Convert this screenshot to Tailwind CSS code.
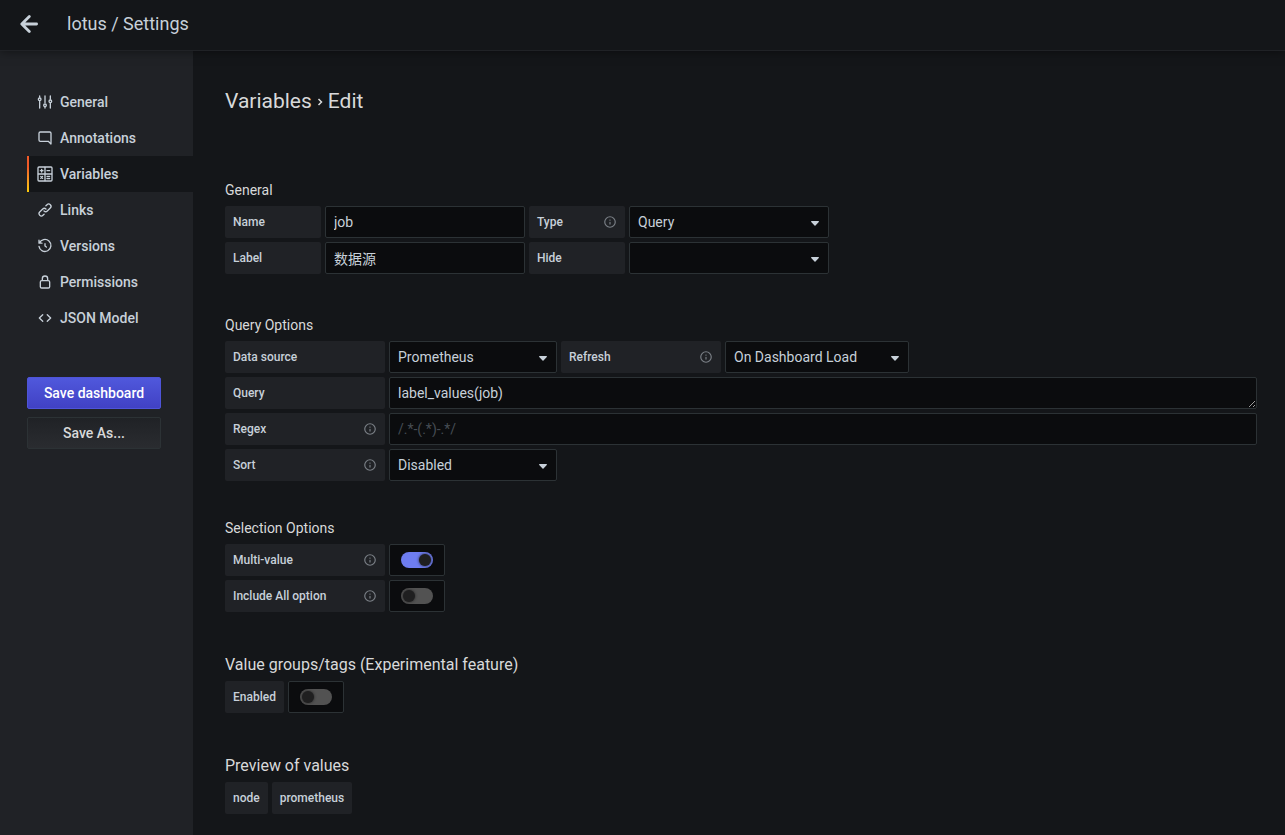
<!DOCTYPE html>
<html lang="en">
<head>
<meta charset="utf-8">
<meta name="viewport" content="width=device-width, initial-scale=1">
<title>lotus / Settings</title>
<script src="https://cdn.jsdelivr.net/npm/@tailwindcss/browser@4"></script>
</head>
<body class="flex min-h-screen flex-col bg-[#141619] font-[Roboto,'Noto_Sans_CJK_SC',sans-serif] text-sm text-[#c7d0d9]">
<svg class="hidden" aria-hidden="true">
  <symbol id="info" viewBox="0 0 24 24"><path fill="currentColor" d="M12,2A10,10,0,1,0,22,12,10,10,0,0,0,12,2Zm0,18a8,8,0,1,1,8-8A8,8,0,0,1,12,20Zm0-8.5a1,1,0,0,0-1,1v3a1,1,0,0,0,2,0v-3A1,1,0,0,0,12,11.5Zm0-4a1.25,1.25,0,1,0,1.25,1.25A1.25,1.25,0,0,0,12,7.5Z"/></symbol>
  <symbol id="caret" viewBox="0 0 8 5"><path fill="currentColor" d="M.7 0h6.6c.6 0 .9.6.5 1L4.5 4.6a.7.7 0 0 1-1 0L.2 1C-.2.6.1 0 .7 0Z"/></symbol>
</svg>

<header class="relative z-10 flex h-[51px] shrink-0 items-center border-b border-[#202226] bg-[#141619] pb-[3px] pl-4 shadow-[0_0_10px_rgba(0,0,0,0.5)]">
  <button type="button" aria-label="Back" class="flex size-[26px] items-center justify-center">
    <svg class="size-[18px]" viewBox="0 0 18 18" fill="none" stroke="currentColor" stroke-width="2.8" stroke-linecap="round" stroke-linejoin="round"><path d="M9.3 1.5 1.8 9l7.5 7.5M2.2 9h14.4"/></svg>
  </button>
  <h1 class="ml-[25px] text-lg leading-6">lotus / Settings</h1>
</header>

<div class="flex grow">
  <aside class="w-[193px] shrink-0 bg-[#202226] pt-[33px] pl-[27px]">
    <nav class="flex flex-col font-medium">
      <a href="#" class="flex h-9 items-center gap-[7px] pl-[10px]">
        <svg class="size-4" viewBox="0 0 24 24" fill="none" stroke="currentColor" stroke-width="2" stroke-linecap="round"><path d="M4 3v2M4 11v10M12 3v10M12 19v2M20 3v5M20 14v7"/><circle cx="4" cy="8" r="2"/><circle cx="12" cy="17" r="2"/><circle cx="20" cy="11" r="2"/></svg>
        General</a>
      <a href="#" class="flex h-9 items-center gap-[7px] pl-[10px]">
        <svg class="size-4" viewBox="0 0 24 24" fill="currentColor"><path d="M19,2H5A3,3,0,0,0,2,5V15a3,3,0,0,0,3,3H16.59l3.7,3.71A1,1,0,0,0,21,22a.84.84,0,0,0,.38-.08A1,1,0,0,0,22,21V5A3,3,0,0,0,19,2Zm1,16.59-2.29-2.3A1,1,0,0,0,17,16H5a1,1,0,0,1-1-1V5A1,1,0,0,1,5,4H19a1,1,0,0,1,1,1Z"/></svg>
        Annotations</a>
      <a href="#" aria-current="page" class="flex h-9 bg-[#141619]">
        <span class="w-[2px] bg-linear-to-b from-[#f05a28] from-30% to-[#fbca0a] to-99%"></span>
        <span class="flex items-center gap-[7px] pl-2">
          <svg class="size-4" viewBox="0 0 24 24" fill="none" stroke="currentColor" stroke-width="2" stroke-linecap="round"><rect x="1.5" y="1.5" width="21" height="21" rx="1.5"/><path d="M12 2v20M2 12h20M5 7h4M7 5v4M15 7h4M5.6 15.6l2.8 2.8M8.4 15.6l-2.8 2.8M15 15.5h4M15 18.8h4"/></svg>
          Variables</span></a>
      <a href="#" class="flex h-9 items-center gap-[7px] pl-[10px]">
        <svg class="size-4" viewBox="0 0 24 24" fill="currentColor"><path d="M10,17.55,8.23,19.27a2.47,2.47,0,0,1-3.5-3.5l4.54-4.55a2.46,2.46,0,0,1,3.39-.09l.12.1a1,1,0,0,0,1.4-1.43A2.75,2.75,0,0,0,14,9.59a4.46,4.46,0,0,0-6.09.22L3.31,14.36a4.48,4.48,0,0,0,6.33,6.33L11.37,19A1,1,0,0,0,10,17.55ZM20.69,3.31a4.49,4.49,0,0,0-6.33,0L12.63,5A1,1,0,0,0,14,6.45l1.73-1.72a2.47,2.47,0,0,1,3.5,3.5l-4.54,4.55a2.46,2.46,0,0,1-3.39.09l-.12-.1a1,1,0,0,0-1.4,1.43,2.75,2.75,0,0,0,.23.21,4.47,4.47,0,0,0,6.09-.22l4.55-4.55A4.49,4.49,0,0,0,20.69,3.31Z"/></svg>
        Links</a>
      <a href="#" class="flex h-9 items-center gap-[7px] pl-[10px]">
        <svg class="size-4" viewBox="0 0 24 24" fill="none" stroke="currentColor" stroke-width="2" stroke-linecap="round" stroke-linejoin="round"><path d="M3 3.2v4.5h4.5M3.6 7.7A9 9 0 1 1 3 12.5M12 8.5V12l2 1.5"/></svg>
        Versions</a>
      <a href="#" class="flex h-9 items-center gap-[7px] pl-[10px]">
        <svg class="size-4" viewBox="0 0 24 24" fill="currentColor"><path d="M17,9V7A5,5,0,0,0,7,7V9a3,3,0,0,0-3,3v7a3,3,0,0,0,3,3H17a3,3,0,0,0,3-3V12A3,3,0,0,0,17,9ZM9,7a3,3,0,0,1,6,0V9H9Zm9,12a1,1,0,0,1-1,1H7a1,1,0,0,1-1-1V12a1,1,0,0,1,1-1H17a1,1,0,0,1,1,1Z"/></svg>
        Permissions</a>
      <a href="#" class="flex h-9 items-center gap-[7px] pl-[10px]">
        <svg class="size-4" viewBox="0 0 24 24" fill="none" stroke="currentColor" stroke-width="2" stroke-linecap="round" stroke-linejoin="round"><path d="M8.6 7 3.5 12l5.1 5M15.4 7l5.1 5-5.1 5"/></svg>
        JSON Model</a>
    </nav>
    <div class="mt-[41px] mr-8 flex flex-col gap-2 font-medium">
      <button type="button" class="h-8 rounded-[2px] border border-[#4e54d8] bg-linear-to-b from-[#5058dc] to-[#4141c4] text-white">Save dashboard</button>
      <button type="button" class="h-8 rounded-[2px] border border-[#2c3235] bg-linear-to-b from-[#202226] to-[#2a2c30] text-[#d8d9da]">Save As...</button>
    </div>
  </aside>

  <main class="min-w-0 grow pt-9 pr-7 pb-5 pl-8">
    <h2 class="flex items-center text-[21px] leading-7 text-[#d8d9da]">Variables
      <svg class="mx-[5px] mt-px h-2 w-[6px]" viewBox="0 0 6 8" fill="none" stroke="currentColor" stroke-width="1.5"><path d="m1.5 1 3 3-3 3"/></svg>
      Edit</h2>

    <form>
      <section class="mt-[63px]">
        <h3 class="mb-1 leading-6 text-[#d8d9da]">General</h3>
        <div class="flex flex-col gap-1">
          <div class="flex gap-1">
            <label for="name" class="flex h-8 w-24 items-center rounded-[2px] bg-[#202226] px-2 text-xs font-medium">Name</label>
            <input id="name" type="text" value="job" class="h-8 w-[200px] rounded-[2px] border border-[#2c3235] bg-[#0b0c0e] px-2">
            <label for="type" class="flex h-8 w-24 items-center justify-between rounded-[2px] bg-[#202226] px-2 text-xs font-medium">Type <svg class="size-[14px] text-[#7b8087]"><use href="#info"/></svg></label>
            <div class="relative w-[200px]">
              <select id="type" class="h-8 w-full appearance-none rounded-[2px] border border-[#2c3235] bg-[#0b0c0e] px-2"><option>Query</option></select>
              <svg class="pointer-events-none absolute top-[15px] right-[10px] h-[5px] w-2"><use href="#caret"/></svg>
            </div>
          </div>
          <div class="flex gap-1">
            <label for="label" class="flex h-8 w-24 items-center rounded-[2px] bg-[#202226] px-2 text-xs font-medium">Label</label>
            <input id="label" type="text" value="数据源" class="h-8 w-[200px] rounded-[2px] border border-[#2c3235] bg-[#0b0c0e] px-2">
            <label for="hide" class="flex h-8 w-24 items-center rounded-[2px] bg-[#202226] px-2 text-xs font-medium">Hide</label>
            <div class="relative w-[200px]">
              <select id="hide" class="h-8 w-full appearance-none rounded-[2px] border border-[#2c3235] bg-[#0b0c0e] px-2"><option></option></select>
              <svg class="pointer-events-none absolute top-[15px] right-[10px] h-[5px] w-2"><use href="#caret"/></svg>
            </div>
          </div>
        </div>
      </section>

      <section class="mt-[39px]">
        <h3 class="mb-1 leading-6 text-[#d8d9da]">Query Options</h3>
        <div class="flex flex-col gap-1">
          <div class="flex gap-1">
            <label for="source" class="flex h-8 w-40 items-center rounded-[2px] bg-[#202226] px-2 text-xs font-medium">Data source</label>
            <div class="relative w-[168px]">
              <select id="source" class="h-8 w-full appearance-none rounded-[2px] border border-[#2c3235] bg-[#0b0c0e] px-2"><option>Prometheus</option></select>
              <svg class="pointer-events-none absolute top-[15px] right-[10px] h-[5px] w-2"><use href="#caret"/></svg>
            </div>
            <label for="refresh" class="flex h-8 w-40 items-center justify-between rounded-[2px] bg-[#202226] px-2 text-xs font-medium">Refresh <svg class="size-[14px] text-[#7b8087]"><use href="#info"/></svg></label>
            <div class="relative w-[184px]">
              <select id="refresh" class="h-8 w-full appearance-none rounded-[2px] border border-[#2c3235] bg-[#0b0c0e] px-2"><option>On Dashboard Load</option></select>
              <svg class="pointer-events-none absolute top-[15px] right-[10px] h-[5px] w-2"><use href="#caret"/></svg>
            </div>
          </div>
          <div class="flex gap-1">
            <label for="query" class="flex h-8 w-40 shrink-0 items-center rounded-[2px] bg-[#202226] px-2 text-xs font-medium">Query</label>
            <textarea id="query" rows="1" class="h-8 min-w-0 grow resize-y rounded-[2px] border border-[#2c3235] bg-[#0b0c0e] px-2 py-[5px] leading-5 scheme-dark">label_values(job)</textarea>
          </div>
          <div class="flex gap-1">
            <label for="regex" class="flex h-8 w-40 shrink-0 items-center justify-between rounded-[2px] bg-[#202226] px-2 text-xs font-medium">Regex <svg class="size-[14px] text-[#7b8087]"><use href="#info"/></svg></label>
            <input id="regex" type="text" placeholder="/.*-(.*)-.*/" class="h-8 min-w-0 grow rounded-[2px] border border-[#2c3235] bg-[#0b0c0e] px-2 placeholder:text-[#464c54]">
          </div>
          <div class="flex gap-1">
            <label for="sort" class="flex h-8 w-40 items-center justify-between rounded-[2px] bg-[#202226] px-2 text-xs font-medium">Sort <svg class="size-[14px] text-[#7b8087]"><use href="#info"/></svg></label>
            <div class="relative w-[168px]">
              <select id="sort" class="h-8 w-full appearance-none rounded-[2px] border border-[#2c3235] bg-[#0b0c0e] px-2"><option>Disabled</option></select>
              <svg class="pointer-events-none absolute top-[15px] right-[10px] h-[5px] w-2"><use href="#caret"/></svg>
            </div>
          </div>
        </div>
      </section>

      <section class="mt-[35px]">
        <h3 class="mb-1 leading-6 text-[#d8d9da]">Selection Options</h3>
        <div class="flex flex-col gap-1">
          <div class="flex gap-1">
            <label for="multi" class="flex h-8 w-40 items-center justify-between rounded-[2px] bg-[#202226] px-2 text-xs font-medium">Multi-value <svg class="size-[14px] text-[#7b8087]"><use href="#info"/></svg></label>
            <span class="flex h-8 w-14 items-center justify-center rounded-[2px] border border-[#2c3235] bg-[#0b0c0e]">
              <input id="multi" type="checkbox" checked class="flex h-4 w-8 appearance-none items-center rounded-full bg-[#525252] px-[2px] before:size-3 before:rounded-full before:bg-[#1f1f20] before:shadow-[0_0_3px_#1f1f20] checked:justify-end checked:bg-[#6e7df0]">
            </span>
          </div>
          <div class="flex gap-1">
            <label for="all" class="flex h-8 w-40 items-center justify-between rounded-[2px] bg-[#202226] px-2 text-xs font-medium">Include All option <svg class="size-[14px] text-[#7b8087]"><use href="#info"/></svg></label>
            <span class="flex h-8 w-14 items-center justify-center rounded-[2px] border border-[#2c3235] bg-[#0b0c0e]">
              <input id="all" type="checkbox" class="flex h-4 w-8 appearance-none items-center rounded-full bg-[#525252] px-[2px] before:size-3 before:rounded-full before:bg-[#1f1f20] before:shadow-[0_0_3px_#1f1f20] checked:justify-end checked:bg-[#6e7df0]">
            </span>
          </div>
        </div>
      </section>

      <section class="mt-[41px]">
        <h3 class="mb-1 text-base leading-6 text-[#d8d9da]">Value groups/tags (Experimental feature)</h3>
        <div class="flex gap-1">
          <label for="enabled" class="flex h-8 items-center rounded-[2px] bg-[#202226] px-2 text-xs font-medium">Enabled</label>
          <span class="flex h-8 w-14 items-center justify-center rounded-[2px] border border-[#2c3235] bg-[#0b0c0e]">
            <input id="enabled" type="checkbox" class="flex h-4 w-8 appearance-none items-center rounded-full bg-[#525252] px-[2px] before:size-3 before:rounded-full before:bg-[#1f1f20] before:shadow-[0_0_3px_#1f1f20] checked:justify-end checked:bg-[#6e7df0]">
          </span>
        </div>
      </section>

      <section class="mt-[41px]">
        <h3 class="mb-1 text-base leading-6 text-[#d8d9da]">Preview of values</h3>
        <div class="flex gap-1 text-xs font-medium">
          <span class="flex h-8 items-center rounded-[2px] bg-[#202226] px-2">node</span>
          <span class="flex h-8 items-center rounded-[2px] bg-[#202226] px-2">prometheus</span>
        </div>
      </section>
    </form>
  </main>
</div>
</body>
</html>
